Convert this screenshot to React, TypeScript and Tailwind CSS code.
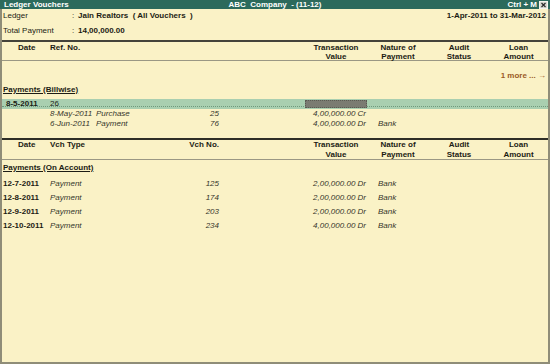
import React from "react";

const onAccount = [
  { date: "12-7-2011", no: "125", amt: "2,00,000.00 Dr" },
  { date: "12-8-2011", no: "174", amt: "2,00,000.00 Dr" },
  { date: "12-9-2011", no: "203", amt: "2,00,000.00 Dr" },
  { date: "12-10-2011", no: "234", amt: "4,00,000.00 Dr" },
];

const bills = [
  { date: "8-May-2011", type: "Purchase", no: "25", amt: "4,00,000.00 Cr", nature: "" },
  { date: "6-Jun-2011", type: "Payment", no: "76", amt: "4,00,000.00 Dr", nature: "Bank" },
];

function RightHeads() {
  return (
    <>
      <div className="w-[62px] text-center">
        Transaction
        <br />
        Value
      </div>
      <div className="w-[62px] text-center">
        Nature of
        <br />
        Payment
      </div>
      <div className="w-[60px] text-center">
        Audit
        <br />
        Status
      </div>
      <div className="w-[59px] text-center">
        Loan
        <br />
        Amount
      </div>
    </>
  );
}

export default function App() {
  return (
    <div className="w-[550px] h-[364px] flex flex-col overflow-hidden bg-[#faf2c6] text-[8px] text-[#1c1c14] font-['Liberation_Sans',Arial,sans-serif]">
      {/* title bar */}
      <div className="h-[9px] shrink-0 flex items-center bg-[#2c6a5c] text-white font-bold leading-[9px] pl-[4px] pr-[2px]">
        <span className="w-[116px]">Ledger Vouchers</span>
        <span className="flex-1 text-center whitespace-pre">ABC  Company  - (11-12)</span>
        <span className="w-[118px] flex items-center justify-end gap-[2px]">
          <span>Ctrl + M</span>
          <svg width="9" height="8" viewBox="0 0 9 8">
            <rect x="0.5" y="0.5" width="8" height="7" fill="#d8d8d0" stroke="#f4f4ee" />
            <path d="M2.5 2 L6.5 6 M6.5 2 L2.5 6" stroke="#2a2a2a" strokeWidth="1.2" />
          </svg>
        </span>
      </div>

      <div className="flex-1 flex flex-col border-l-2 border-r-2 border-b-2 border-[#8f8d78]">
        {/* ledger info */}
        <div className="pt-[1px] pb-[3px] border-b-2 border-[#44433a]">
          <div className="h-[12px] leading-[12px] flex pl-[1px] pr-[2px]">
            <span className="w-[69px]">Ledger</span>
            <span className="w-[6px]">:</span>
            <span className="font-bold whitespace-pre">Jain Realtors  ( All Vouchers  )</span>
            <span className="ml-auto font-bold">1-Apr-2011 to 31-Mar-2012</span>
          </div>
          <div className="mt-[3px] h-[12px] leading-[12px] flex pl-[1px]">
            <span className="w-[69px]">Total Payment</span>
            <span className="w-[6px]">:</span>
            <span className="font-bold">14,00,000.00</span>
          </div>
        </div>

        {/* header 1 */}
        <div className="flex font-bold leading-[9px] h-[19px] pt-[1px] border-b border-[#9a9884]">
          <div className="w-[44px] pl-[16px]">Date</div>
          <div className="w-[259px] pl-[4px]">Ref. No.</div>
          <RightHeads />
        </div>

        <div className="mt-[10px] h-[10px] leading-[10px] text-right pr-[2px] font-bold text-[#9a5a26]">
          1 more ... →
        </div>
        <div className="mt-[4px] h-[10px] leading-[10px] pl-[1px] font-bold underline">
          Payments (Billwise)
        </div>

        {/* selected bill row */}
        <div className="relative mt-[4px] h-[10px] leading-[10px] flex bg-[#a9cfb0] font-bold">
          <div className="absolute left-0 right-0 top-[7px] border-t border-dotted border-[#6f9a7c]" />
          <div className="relative w-[44px] pl-[4px]">8-5-2011</div>
          <div className="relative w-[259px] pl-[4px] font-normal">26</div>
          <div className="relative w-[62px] pt-[1px]">
            <div className="h-[8px] bg-[#7b7b72] border border-dotted border-[#5a5a52]" />
          </div>
        </div>

        {bills.map((b) => (
          <div key={b.date} className="h-[10px] leading-[10px] flex italic text-[#35352b]">
            <div className="w-[44px]" />
            <div className="w-[173px] flex pl-[4px]">
              <span className="w-[46px]">{b.date}</span>
              <span className="flex-1">{b.type}</span>
              <span>{b.no}</span>
            </div>
            <div className="w-[86px]" />
            <div className="w-[62px] text-right pr-[1px]">{b.amt}</div>
            <div className="w-[62px] pl-[11px]">{b.nature}</div>
          </div>
        ))}

        {/* header 2 */}
        <div className="mt-[9px] flex font-bold leading-[10px] h-[22px] border-t-2 border-b border-[#2e2e26] border-b-[#9a9884]">
          <div className="w-[44px] pl-[16px]">Date</div>
          <div className="w-[173px] flex pl-[4px]">
            <span className="flex-1">Vch Type</span>
            <span>Vch No.</span>
          </div>
          <div className="w-[86px]" />
          <RightHeads />
        </div>

        <div className="mt-[3px] h-[10px] leading-[10px] pl-[1px] font-bold underline">
          Payments (On Account)
        </div>

        <div className="mt-[4px]">
          {onAccount.map((r) => (
            <div key={r.date} className="h-[14px] leading-[14px] flex">
              <div className="w-[44px] pl-[1px] font-bold">{r.date}</div>
              <div className="w-[173px] flex pl-[4px] italic text-[#35352b]">
                <span className="flex-1">Payment</span>
                <span>{r.no}</span>
              </div>
              <div className="w-[86px]" />
              <div className="w-[62px] text-right pr-[1px] italic text-[#35352b]">{r.amt}</div>
              <div className="w-[62px] pl-[11px] italic text-[#35352b]">Bank</div>
            </div>
          ))}
        </div>
      </div>
    </div>
  );
}
